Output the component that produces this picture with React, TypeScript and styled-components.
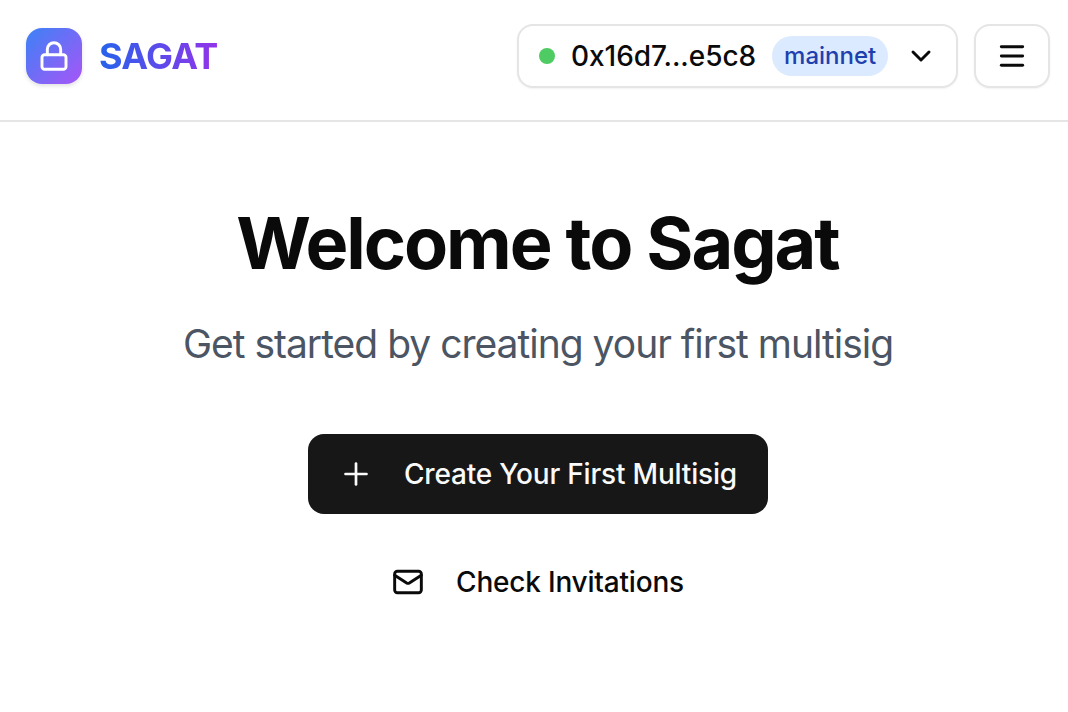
import { ChevronDown, Lock, Mail, Menu, Plus } from 'lucide-react';
import styled, { createGlobalStyle } from 'styled-components';

const GlobalStyle = createGlobalStyle`
  html, body {
    margin: 0;
    padding: 0;
    background: #ffffff;
  }
  body {
    font-family: Inter, "Liberation Sans", sans-serif;
    color: #0a0a0a;
  }
  * {
    box-sizing: border-box;
  }
`;

const App = () => {
  return (
    <Page>
      <GlobalStyle />
      <Header>
        <Brand>
          <LogoMark>
            <Lock size={32} strokeWidth={2.2} color="#ffffff" />
          </LogoMark>
          <BrandName>SAGAT</BrandName>
        </Brand>
        <HeaderActions>
          <WalletButton>
            <StatusDot />
            <Address>0x16d7...e5c8</Address>
            <NetworkBadge>mainnet</NetworkBadge>
            <ChevronSlot>
              <ChevronDown size={32} strokeWidth={2.2} color="#0a0a0a" />
            </ChevronSlot>
          </WalletButton>
          <MenuButton>
            <Menu size={32} strokeWidth={2.2} color="#0a0a0a" />
          </MenuButton>
        </HeaderActions>
      </Header>
      <Main>
        <Title>Welcome to Sagat</Title>
        <Subtitle>Get started by creating your first multisig</Subtitle>
        <PrimaryButton>
          <Plus size={36} strokeWidth={1.8} color="#fafafa" />
          <span>Create Your First Multisig</span>
        </PrimaryButton>
        <GhostButton>
          <Mail size={32} strokeWidth={2.2} color="#0a0a0a" />
          <span>Check Invitations</span>
        </GhostButton>
      </Main>
    </Page>
  );
};

export default App;

const Page = styled.div`
  width: 1068px;
  height: 712px;
  overflow: hidden;
  background: #ffffff;
`;

const Header = styled.header`
  height: 122px;
  padding: 24px 18px 32px 26px;
  border-bottom: 2px solid #e5e5e5;
  display: flex;
  align-items: center;
  justify-content: space-between;
`;

const Brand = styled.div`
  display: flex;
  align-items: center;
  gap: 17px;
`;

const LogoMark = styled.div`
  width: 56px;
  height: 56px;
  border-radius: 16px;
  background: linear-gradient(135deg, #3b82f6, #a855f7);
  box-shadow: 0 2px 4px rgba(0, 0, 0, 0.12);
  display: flex;
  align-items: center;
  justify-content: center;
`;

const BrandName = styled.span`
  font-size: 36px;
  font-weight: 700;
  line-height: 40px;
  letter-spacing: -0.7px;
  background: linear-gradient(90deg, #2563eb, #9333ea);
  -webkit-background-clip: text;
  background-clip: text;
  color: transparent;
`;

const HeaderActions = styled.div`
  display: flex;
  align-items: center;
  gap: 16px;
`;

const WalletButton = styled.button`
  width: 441px;
  height: 64px;
  padding: 0 20px;
  background: #ffffff;
  border: 2px solid #e5e5e5;
  border-radius: 16px;
  box-shadow: 0 1px 2px rgba(0, 0, 0, 0.05);
  font-family: inherit;
  display: flex;
  align-items: center;
`;

const StatusDot = styled.span`
  width: 16px;
  height: 16px;
  border-radius: 50%;
  background: #4fcb63;
  flex: none;
`;

const Address = styled.span`
  margin-left: 16px;
  font-size: 28px;
  font-weight: 500;
  line-height: 32px;
  letter-spacing: -0.05px;
  color: #0a0a0a;
`;

const NetworkBadge = styled.span`
  margin-left: 16px;
  height: 40px;
  padding: 0 12px;
  border-radius: 20px;
  background: #dbeafe;
  color: #1e40af;
  font-size: 24px;
  font-weight: 500;
  line-height: 40px;
`;

const ChevronSlot = styled.span`
  margin-left: 17px;
  display: flex;
`;

const MenuButton = styled.button`
  width: 76px;
  height: 64px;
  padding: 0;
  background: #ffffff;
  border: 2px solid #e5e5e5;
  border-radius: 16px;
  box-shadow: 0 1px 2px rgba(0, 0, 0, 0.05);
  display: flex;
  align-items: center;
  justify-content: center;
`;

const Main = styled.main`
  padding: 81px 0 0 8px;
  display: flex;
  flex-direction: column;
  align-items: center;
`;

const Title = styled.h1`
  margin: 0 0 0 -1px;
  font-size: 72px;
  font-weight: 700;
  line-height: 80px;
  letter-spacing: -2.05px;
  color: #0a0a0a;
`;

const Subtitle = styled.p`
  margin: 41px 0 0;
  font-size: 39px;
  font-weight: 400;
  line-height: 40px;
  letter-spacing: -1px;
  color: #4b5563;
`;

const PrimaryButton = styled.button`
  margin-top: 70px;
  width: 460px;
  height: 80px;
  padding: 0 30px;
  border: 0;
  border-radius: 16px;
  background: #171717;
  color: #fafafa;
  font-family: inherit;
  font-size: 28px;
  font-weight: 500;
  letter-spacing: -0.2px;
  white-space: nowrap;
  display: flex;
  align-items: center;
  gap: 30px;
`;

const GhostButton = styled.button`
  margin-top: 28px;
  height: 80px;
  padding: 0;
  border: 0;
  background: transparent;
  color: #0a0a0a;
  font-family: inherit;
  font-size: 28px;
  font-weight: 500;
  letter-spacing: -0.2px;
  display: flex;
  align-items: center;
  gap: 32px;
`;
